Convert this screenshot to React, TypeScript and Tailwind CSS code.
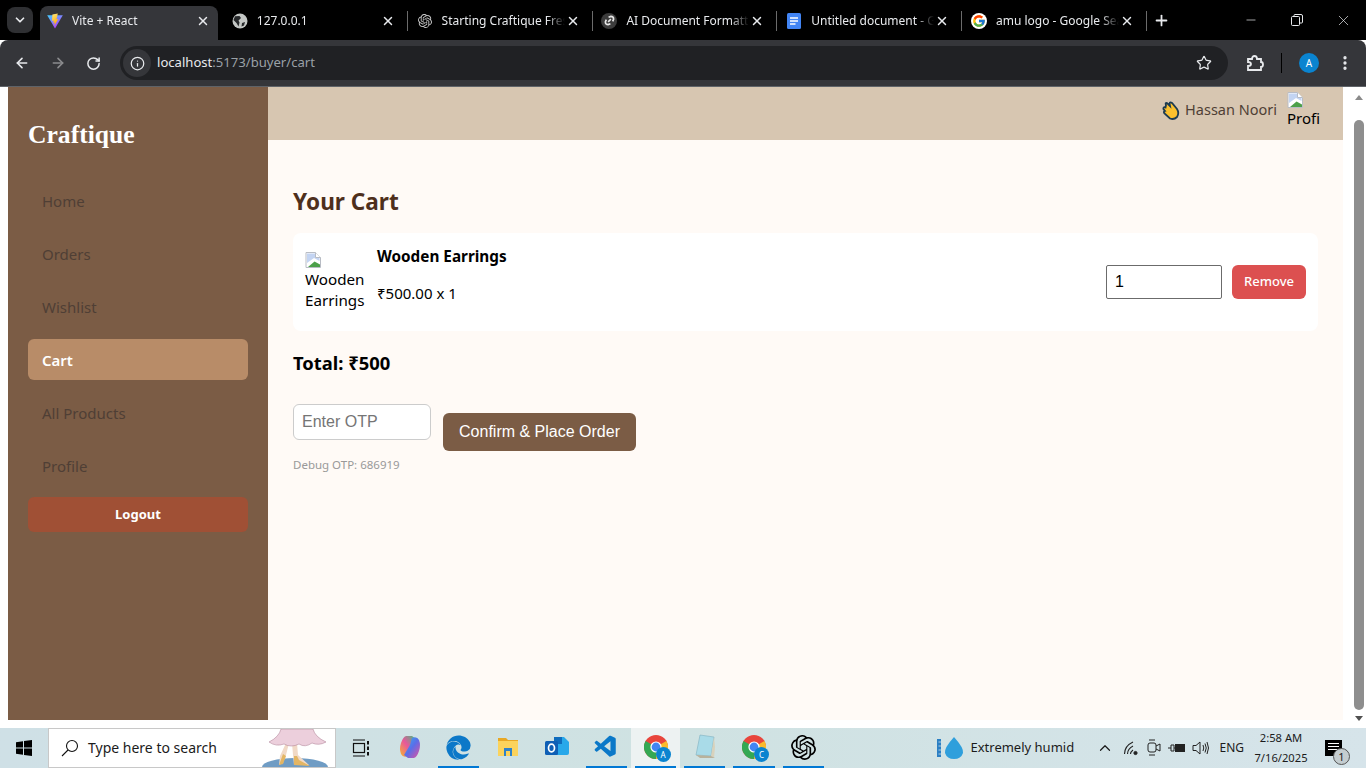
import type { ReactNode } from "react";
import {
  ArrowLeft,
  ArrowRight,
  ChevronDown,
  ChevronUp,
  EllipsisVertical,
  Info,
  Minus,
  Plus,
  RotateCw,
  Star,
  X,
} from "lucide-react";
import { FaEdge } from "react-icons/fa";
import { FcGoogle } from "react-icons/fc";
import { SiOpenai } from "react-icons/si";
import { VscVscode } from "react-icons/vsc";

const navItems = ["Home", "Orders", "Wishlist", "Cart", "All Products", "Profile"];

function ViteIcon() {
  return (
    <svg width="16" height="16" viewBox="0 0 16 16">
      <defs>
        <linearGradient id="vite-a" x1="0" y1="0" x2="0.7" y2="1">
          <stop offset="0" stopColor="#41d1ff" />
          <stop offset="1" stopColor="#bd34fe" />
        </linearGradient>
        <linearGradient id="vite-b" x1="0" y1="0" x2="0.4" y2="1">
          <stop offset="0" stopColor="#ffea83" />
          <stop offset="1" stopColor="#ffa800" />
        </linearGradient>
      </defs>
      <path d="M0.2 2.2 L15.8 2.2 L8 15.6 Z" fill="url(#vite-a)" />
      <path d="M10.8 0.4 L5.4 1.4 L5 8 L6.8 7.6 L6.3 10 L7.9 9.6 L7.2 13 L11.2 6 L9.4 6.3 L10 4.2 Z" fill="url(#vite-b)" />
    </svg>
  );
}

function GlobeIcon() {
  return (
    <svg width="16" height="16" viewBox="0 0 16 16">
      <circle cx="8" cy="8" r="7.5" fill="#c4c7c5" />
      <path d="M3 3.2 L7.5 3 L9 5 L6.5 7.5 L7.5 9.5 L6.5 13.5 L4.5 10 L1.5 7 Z M10 10 L13 9 L12 12.5 L9.5 13.5 Z" fill="#26282a" />
    </svg>
  );
}

function KnotIcon() {
  return <SiOpenai size={14} className="text-[#c8c8c8]" />;
}

function LinkIcon() {
  return (
    <span className="w-4 h-4 rounded-full bg-[#3c3c3c] flex items-center justify-center">
      <svg width="11" height="11" viewBox="0 0 12 12" fill="none" stroke="#e8e8e8" strokeWidth="1.8">
        <path d="M5 2.5 L7.5 1.5 Q10.5 1.5 10.5 4.5 L9.5 7" />
        <path d="M7 9.5 L4.5 10.5 Q1.5 10.5 1.5 7.5 L2.5 5" />
        <path d="M4.5 7.5 L7.5 4.5" />
      </svg>
    </span>
  );
}

function DocsIcon() {
  return (
    <svg width="16" height="16" viewBox="0 0 16 16">
      <rect x="1" y="0" width="14" height="16" rx="1.5" fill="#4285f4" />
      <path d="M4 5 H12 M4 8 H12 M4 11 H9.5" stroke="#fff" strokeWidth="1.5" />
    </svg>
  );
}

const tabs = [
  { title: "Vite + React", icon: <ViteIcon />, active: true, sep: false },
  { title: "127.0.0.1", icon: <GlobeIcon />, active: false, sep: true },
  { title: "Starting Craftique Fresh", icon: <KnotIcon />, active: false, sep: true },
  { title: "AI Document Formatting", icon: <LinkIcon />, active: false, sep: true },
  { title: "Untitled document - Google", icon: <DocsIcon />, active: false, sep: true },
  {
    title: "amu logo - Google Search",
    icon: (
      <span className="w-4 h-4 rounded-full bg-white flex items-center justify-center">
        <FcGoogle size={14} />
      </span>
    ),
    active: false,
    sep: true,
  },
];

function BrowserChrome() {
  return (
    <div className="shrink-0 font-['Noto_Sans',sans-serif] text-[#e8eaed]">
      <div className="h-10 bg-black flex items-end">
        <div className="w-[40px] h-10 flex items-start pl-[7px] pt-[7px]">
          <div className="w-[26px] h-[26px] rounded-lg bg-[#2f3033] flex items-center justify-center">
            <ChevronDown size={14} strokeWidth={3} />
          </div>
        </div>
        {tabs.map((tab) => (
          <div
            key={tab.title}
            className={
              tab.active
                ? "w-[178px] mr-[6.8px] h-[34px] pb-[5px] rounded-t-lg bg-[#35363a] flex items-center pl-[7px]"
                : "w-[184.8px] h-[34px] pb-[5px] flex items-center pl-[7px]"
            }
          >
            <span className="w-4 h-4 flex items-center justify-center shrink-0">{tab.icon}</span>
            <span className="ml-[9px] w-[123px] shrink-0 whitespace-nowrap overflow-hidden text-xs [mask-image:linear-gradient(90deg,#000_85%,transparent)]">
              {tab.title}
            </span>
            <span className="w-4 flex items-center justify-center shrink-0">
              <X size={14} strokeWidth={2.5} />
            </span>
            {tab.sep && <span className="ml-[11px] w-px h-5 bg-[#6b6b6b] shrink-0" />}
          </div>
        ))}
        <div className="h-[34px] pb-[5px] flex items-center">
          <Plus size={17} strokeWidth={2.5} className="ml-[4px]" />
        </div>
        <div className="h-10 ml-auto flex items-center">
          <div className="w-[46px] flex justify-center">
            <Minus size={14} strokeWidth={1.2} />
          </div>
          <div className="w-[46px] flex justify-center">
            <svg width="12" height="12" viewBox="0 0 12 12" fill="none" stroke="#e8eaed">
              <rect x="0.5" y="2.5" width="8" height="9" rx="1" />
              <path d="M3 2.5 V1.5 Q3 0.5 4 0.5 H10 Q11.5 0.5 11.5 2 V8 Q11.5 9 10.5 9 H8.5" />
            </svg>
          </div>
          <div className="w-[46px] flex justify-center">
            <X size={17} strokeWidth={1} />
          </div>
        </div>
      </div>
      <div className="h-[46px] bg-[#35363a] rounded-t-lg flex items-center">
        <div className="w-[120px] flex items-center pl-[14px] gap-[20px]">
          <ArrowLeft size={16} strokeWidth={2.4} />
          <ArrowRight size={16} strokeWidth={2.4} className="text-[#8b8c8e]" />
          <RotateCw size={15} strokeWidth={2.4} />
        </div>
        <div className="w-[1108px] h-[34px] rounded-full bg-[#202124] flex items-center pl-[3px]">
          <span className="w-[28px] h-[28px] rounded-full bg-[#35363a] flex items-center justify-center">
            <Info size={15} />
          </span>
          <span className="ml-[6px] text-[13.1px]">
            localhost<span className="text-[#9aa0a6]">:5173/buyer/cart</span>
          </span>
          <Star size={16} strokeWidth={1.8} className="ml-auto mr-4" />
        </div>
        <div className="flex-1 flex items-center pl-[18px]">
          <svg width="18" height="18" viewBox="0 0 18 18" fill="none" stroke="#e8eaed" strokeWidth="1.8">
            <path d="M2 5 H6 Q6 2 8.5 2 Q11 2 11 5 H15 V8 Q17 8 17 10.5 Q17 13 15 13 V16 H2 V12 Q5 12 5 10 Q5 8 2 8 Z" />
          </svg>
          <span className="ml-[17px] w-px h-[20px] bg-black" />
          <span className="ml-[17px] w-5 h-5 rounded-full bg-[#0a84d0] text-white text-[10px] flex items-center justify-center">
            A
          </span>
          <EllipsisVertical size={18} strokeWidth={2.4} className="ml-[17px]" />
        </div>
      </div>
      <div className="h-px bg-[#5f6368]" />
    </div>
  );
}

function BrokenImage() {
  return (
    <svg width="16" height="16" viewBox="0 0 16 16" className="block shrink-0">
      <path d="M1 0.5 H10.5 L15.5 5.5 V15.5 H1 Z" fill="#fff" stroke="#b8bcc4" />
      <path d="M2 1.5 H10 L14.5 6 V9 L9 6 L2 11 Z" fill="#c3d4f2" />
      <path d="M3 15 L9.5 9.5 L15 12.5 V15 Z" fill="#4ca04a" />
      <path d="M10.5 0.5 V5.5 H15.5" fill="#fff" stroke="#b8bcc4" />
    </svg>
  );
}

function Sidebar() {
  return (
    <aside className="w-[260px] bg-[#7b5c45] px-5 shrink-0 flex flex-col font-['Noto_Sans',sans-serif]">
      <h1 className="mt-[31px] text-[25.6px] leading-[34px] font-bold text-white font-['Liberation_Serif',serif]">Craftique</h1>
      <nav className="mt-[28px] flex flex-col gap-3">
        {navItems.map((item) =>
          item === "Cart" ? (
            <a key={item} className="h-[41px] pt-[1px] rounded-md bg-[#b88c68] px-[14px] flex items-center text-[15px] font-semibold text-white">
              {item}
            </a>
          ) : (
            <a key={item} className="h-[41px] pt-[1px] rounded-md px-[14px] flex items-center text-[15px] text-[#4f3f35]">
              {item}
            </a>
          )
        )}
      </nav>
      <button className="mt-[11px] h-[35px] pt-[1px] rounded-md bg-[#a05035] text-white text-[13px] font-bold">Logout</button>
    </aside>
  );
}

function CartPage() {
  return (
    <div className="flex-1 min-w-0 flex flex-col font-['Noto_Sans',sans-serif]">
      <header className="h-[53px] pb-[7px] bg-[#d7c6b1] flex items-center justify-end pr-5 shrink-0">
        <svg width="18" height="19" viewBox="0 0 18 19" className="mr-[5px] mt-[1px]">
          <path d="M4 4 Q3 1.5 5 2 L8 5 L7.5 2.5 Q8 0.5 10 2 L15 8 Q17.5 12 15 16 Q12 19 8 17.5 L2.5 12.5 Q1 10.5 3 10 L1.5 8 Q1 5.5 3.5 6.5 Z" fill="#fbc02d" stroke="#1c3b52" strokeWidth="1.8" />
        </svg>
        <span className="text-[14.5px] text-[#4f3f35]">Hassan Noori</span>
        <div className="ml-[10px] mr-[3px] w-[33px] h-9 overflow-hidden text-[15px] leading-[21px] text-black">
          <BrokenImage />
          <span className="block">Profile</span>
        </div>
      </header>
      <main className="flex-1 bg-[#fffaf6] px-[25px] pt-[46px]">
        <h2 className="text-[22.6px] leading-[32px] font-bold text-[#4e2f1c]">Your Cart</h2>
        <div className="mt-[15px] h-[98px] rounded-lg bg-white px-3 py-[12px] flex items-center">
          <div className="w-[60px] h-[60px] text-[15.2px] leading-[21px] text-black shrink-0 self-start mt-[7px]">
            <BrokenImage />
            <span className="block mt-[1px]">Wooden Earrings</span>
          </div>
          <div className="ml-3 self-start mt-[-1px] text-black">
            <p className="text-[15.3px] leading-[24px] font-bold">Wooden Earrings</p>
            <p className="mt-[13px] text-[15px] leading-[24px]">₹500.00 x 1</p>
          </div>
          <input
            readOnly
            value="1"
            className="ml-auto w-[116px] h-[34px] border border-[#6b6b6b] rounded-[2px] px-2 text-[16px] text-black bg-white font-['Liberation_Sans',sans-serif]"
          />
          <button className="ml-[10px] w-[74px] h-[34px] rounded-md bg-[#dc5050] text-white text-[13px] font-medium">Remove</button>
        </div>
        <p className="mt-[18px] text-[18.4px] leading-[28px] font-bold text-black">Total: ₹500</p>
        <div className="mt-[27px] flex items-start gap-3">
          <input
            placeholder="Enter OTP"
            className="w-[138px] h-[36px] rounded-md border border-[#cccccc] bg-white px-2 text-[16px] placeholder:text-[#757575] font-['Liberation_Sans',sans-serif]"
          />
          <button className="mt-[9px] w-[193px] h-[38px] rounded-md bg-[#7b5c45] text-white text-[16px] font-['Liberation_Sans',sans-serif]">
            Confirm &amp; Place Order
          </button>
        </div>
        <p className="mt-[6px] text-[11.5px] leading-[16px] text-[#999999]">Debug OTP: 686919</p>
      </main>
    </div>
  );
}

function Scrollbar() {
  return (
    <div className="w-[23px] shrink-0 bg-white flex flex-col items-center pl-2 pt-[8px]">
      <div className="w-0 h-0 border-x-[4px] border-x-transparent border-b-[5px] border-b-[#8a8a8a]" />
      <div className="mt-[20px] w-[10px] h-[590px] rounded-full bg-[#8e8e8e]" />
      <div className="mt-[6px] w-0 h-0 border-x-[4px] border-x-transparent border-t-[5px] border-t-[#505050]" />
    </div>
  );
}

function ChromeLogo({ badge, color }: { badge: string; color: string }) {
  return (
    <span className="relative w-6 h-6 flex">
      <svg width="24" height="24" viewBox="0 0 24 24">
        <circle cx="12" cy="12" r="12" fill="#e8453c" />
        <path d="M12 12 L22.4 6 A12 12 0 0 1 12 24 Z" fill="#f9bb2d" />
        <path d="M12 12 L12 24 A12 12 0 0 1 1.6 6 Z" fill="#34a853" />
        <circle cx="12" cy="12" r="5.6" fill="#fff" />
        <circle cx="12" cy="12" r="4.4" fill="#4285f4" />
      </svg>
      <span
        className="absolute -right-[3px] -bottom-[3px] w-[15px] h-[15px] rounded-full text-white text-[8px] flex items-center justify-center"
        style={{ backgroundColor: color }}
      >
        {badge}
      </span>
    </span>
  );
}

function TaskIcon({ children, active, running }: { children: ReactNode; active?: boolean; running?: boolean }) {
  return (
    <div className={active ? "w-[49.2px] h-10 flex flex-col bg-[#edf2f2]" : "w-[49.2px] h-10 flex flex-col"}>
      <div className="flex-1 flex items-center justify-center">{children}</div>
      {running ? <div className="h-[2px] mx-[4px] bg-[#0078d4]" /> : <div className="h-[2px]" />}
    </div>
  );
}

function Taskbar() {
  return (
    <div className="h-10 shrink-0 bg-gradient-to-r from-[#cfe0e6] via-[#cfe2e2] to-[#d6e4ea] flex items-center text-[#1b1b1b] font-['Noto_Sans',sans-serif]">
      <div className="w-[48px] flex justify-center">
        <svg width="16" height="16" viewBox="0 0 16 16" fill="#000">
          <path d="M0 2.2 L7 1.2 V7.5 H0 Z M8 1 L16 0 V7.5 H8 Z M0 8.5 H7 V14.8 L0 13.8 Z M8 8.5 H16 V16 L8 15 Z" />
        </svg>
      </div>
      <div className="relative w-[288px] h-10 bg-white border border-[#c8c8c8] flex items-center pl-[12px] overflow-hidden">
        <svg width="18" height="18" viewBox="0 0 18 18" fill="none" stroke="#111" strokeWidth="1.1">
          <circle cx="11" cy="7" r="5.5" />
          <path d="M7 11 L1 17" />
        </svg>
        <span className="ml-[9px] text-sm">Type here to search</span>
        <svg width="70" height="40" viewBox="0 0 70 40" className="absolute right-[6px] top-0">
          <ellipse cx="36" cy="38" rx="33" ry="9" fill="#6f9cc4" />
          <path d="M21 27 L27 14 H30 L27 26 L24 34 L20 36 Z M33 14 H38 L39 26 L50 36 L35 36 L34 26 Z" fill="#f1d9c6" />
          <path d="M24 25 L27 27 L24 35 L20 36 Z M35 27 L38 27 L40 31 L51 37 L35 36 Z" fill="#e3b563" />
          <path d="M22 0 H54 Q56 8 67 13 Q60 17 53 14 Q46 19 40 15 Q32 19 25 15 Q17 18 10 13 Q20 8 22 0 Z" fill="#eccfdc" stroke="#a9788f" strokeWidth="0.5" />
        </svg>
      </div>
      <div className="w-[49px] flex justify-center">
        <svg width="18" height="18" viewBox="0 0 18 18" fill="none" stroke="#111" strokeWidth="1.2">
          <path d="M1 1 H13 M1 17 H13" />
          <rect x="1.5" y="4.5" width="11" height="9" />
          <path d="M16 2 V5.5 M16 7.5 V11 M16 13 V16.5" strokeWidth="2" />
        </svg>
      </div>
      <TaskIcon>
        <svg width="24" height="24" viewBox="0 0 24 24">
          <defs>
            <linearGradient id="cop-a" x1="0" y1="0" x2="1" y2="1">
              <stop offset="0" stopColor="#2fb4f0" />
              <stop offset="0.5" stopColor="#5b6ee8" />
              <stop offset="1" stopColor="#e84f9c" />
            </linearGradient>
            <linearGradient id="cop-b" x1="0" y1="1" x2="1" y2="0">
              <stop offset="0" stopColor="#f7b52c" />
              <stop offset="0.5" stopColor="#e8579b" />
              <stop offset="1" stopColor="#3fbf7f" />
            </linearGradient>
          </defs>
          <path d="M8 1 H14 L18 4 L12 14 L10 21 Q5 23 3 19 Q1 14 3 8 Q5 2 8 1 Z" fill="url(#cop-b)" />
          <path d="M16 23 H10 L6 20 L12 10 L14 3 Q19 1 21 5 Q23 10 21 16 Q19 22 16 23 Z" fill="url(#cop-a)" />
        </svg>
      </TaskIcon>
      <TaskIcon running>
        <FaEdge size={25} className="text-[#0c78c8]" />
      </TaskIcon>
      <TaskIcon>
        <svg width="22" height="20" viewBox="0 0 22 20">
          <path d="M1 1 H9 L11 3 H21 V8 H1 Z" fill="#e8a825" />
          <rect x="1" y="4" width="20" height="15" fill="#fbd35c" />
          <path d="M7 19 V11 H15 V19 H13 V14 H9 V19 Z" fill="#2f82c8" />
        </svg>
      </TaskIcon>
      <TaskIcon>
        <svg width="24" height="22" viewBox="0 0 24 22">
          <path d="M9 1 H19 L24 6 V17 Q24 19 22 19 H9 Z" fill="#28a8ea" />
          <path d="M9 1 H17 V8 H9 Z" fill="#0f6cbd" />
          <rect x="0" y="5" width="13" height="14" rx="1.5" fill="#0f5fb5" />
          <ellipse cx="6.5" cy="12" rx="3" ry="3.8" fill="none" stroke="#fff" strokeWidth="1.7" />
        </svg>
      </TaskIcon>
      <TaskIcon running>
        <VscVscode size={26} className="text-[#0a78c8]" />
      </TaskIcon>
      <TaskIcon active running>
        <ChromeLogo badge="A" color="#0a84d0" />
      </TaskIcon>
      <TaskIcon running>
        <svg width="24" height="26" viewBox="0 0 24 26">
          <path d="M7 1 L21 3 L18 22 L3 21 Z" fill="#a9dbe8" stroke="#7fb0c0" strokeWidth="0.6" />
          <path d="M18 22 L21 24 L22 13 L21 3 Z" fill="#d8d2bc" />
          <path d="M3 21 L18 22 L22 24 L7 24 Z" fill="#b8b29c" />
        </svg>
      </TaskIcon>
      <TaskIcon running>
        <ChromeLogo badge="C" color="#0a84d0" />
      </TaskIcon>
      <TaskIcon running>
        <SiOpenai size={25} className="text-black" />
      </TaskIcon>
      <div className="ml-auto flex items-center h-10">
        <svg width="30" height="24" viewBox="0 0 30 24">
          <rect x="0" y="3" width="4" height="18" fill="#2b7fc4" />
          <path d="M1.5 6 H4 M1.5 10 H4 M1.5 14 H4 M1.5 18 H4" stroke="#cfe0e6" strokeWidth="0.8" />
          <path d="M17 1 Q27 12 26 17 Q24 23 17 23 Q10 23 8 17 Q7 12 17 1 Z" fill="#2f9fdc" />
        </svg>
        <span className="ml-[3px] text-[13px] w-[121px]">Extremely humid</span>
        <ChevronUp size={18} strokeWidth={1.6} className="ml-[5px]" />
        <svg width="16" height="16" viewBox="0 0 16 16" fill="none" stroke="#222" className="ml-[9px]">
          <path d="M1.5 14 Q1.5 6 10 2 M4.5 14 Q4.5 9 10 6 M7.5 14 Q7.5 12 10 10" strokeWidth="1.1" />
          <circle cx="12.5" cy="13" r="1.6" fill="#222" />
        </svg>
        <svg width="14" height="20" viewBox="0 0 14 20" fill="none" stroke="#222" className="ml-[8px]">
          <rect x="1" y="5" width="8" height="9" rx="2" />
          <path d="M9 8 L13 6 V13 L9 11 M2 2 H8 M2 17 H8" />
        </svg>
        <svg width="17" height="14" viewBox="0 0 17 14" fill="none" stroke="#222" className="ml-[7px]">
          <path d="M0 7 H3 M3 4 H6 V10 H3 Z M6 7 H7" />
          <rect x="7.5" y="3.5" width="9" height="7" fill="#222" />
        </svg>
        <svg width="18" height="16" viewBox="0 0 18 16" fill="none" stroke="#222" className="ml-[7px]">
          <path d="M1 5.5 H4 L8 2 V14 L4 10.5 H1 Z" />
          <path d="M11 5 Q12.5 8 11 11 M13 3.5 Q15.5 8 13 12.5 M15 2 Q18 8 15 14" />
        </svg>
        <span className="ml-[9px] text-xs">ENG</span>
        <div className="ml-[7px] w-[60px] text-[11.2px] leading-[20px] text-center">
          <div>2:58 AM</div>
          <div>7/16/2025</div>
        </div>
        <div className="relative ml-[14px] mr-[24px] w-[17px] h-[16px] bg-black">
          <div className="mx-[3px] mt-[3px] h-px bg-white" />
          <div className="mx-[3px] mt-[2px] h-px bg-white" />
          <div className="mx-[3px] mt-[2px] h-px bg-white" />
          <span className="absolute -right-[8px] -bottom-[9px] w-[17px] h-[17px] rounded-full bg-[#c4cdd0] border border-[#555] text-[11px] leading-[15px] text-center">
            1
          </span>
        </div>
      </div>
    </div>
  );
}

export default function App() {
  return (
    <div className="w-[1366px] h-[768px] overflow-hidden bg-white flex flex-col">
      <BrowserChrome />
      <div className="flex-1 min-h-0 flex">
        <div className="flex-1 min-w-0 pl-2 pb-[8px] flex">
          <Sidebar />
          <CartPage />
        </div>
        <Scrollbar />
      </div>
      <Taskbar />
    </div>
  );
}
